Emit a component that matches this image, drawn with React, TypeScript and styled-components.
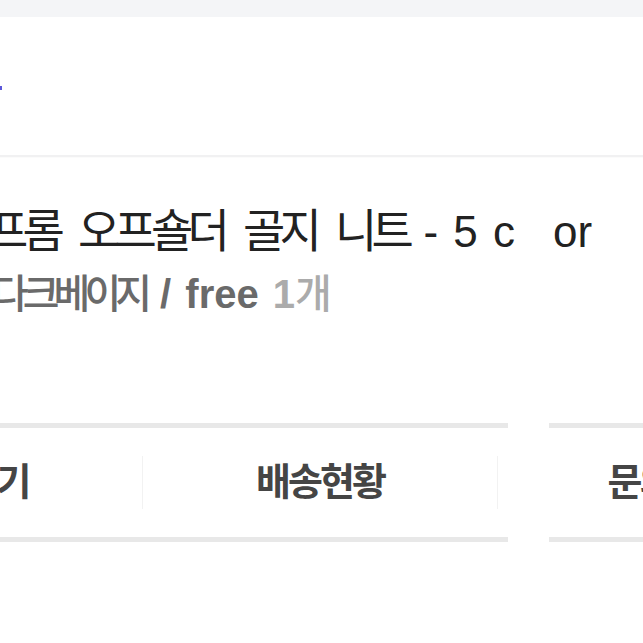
import React from "react";
import styled, { createGlobalStyle } from "styled-components";

const GlobalStyle = createGlobalStyle`
  html, body {
    margin: 0;
    padding: 0;
    background: #ffffff;
    overflow: hidden;
  }
  body {
    font-family: "Liberation Sans", "Noto Sans CJK KR", sans-serif;
    -webkit-font-smoothing: antialiased;
  }
`;

const Page = styled.div`
  width: 643px;
  height: 643px;
  overflow: hidden;
  display: flex;
  flex-direction: column;
`;

const TopBand = styled.div`
  height: 17px;
  background: #f4f5f7;
  flex-shrink: 0;
`;

const Header = styled.div`
  height: 138px;
  display: flex;
  flex-direction: column;
  flex-shrink: 0;
`;

const TabMark = styled.span`
  display: block;
  width: 2px;
  height: 4px;
  margin-top: 69px;
  background: #5b57d9;
`;

const Divider = styled.div`
  height: 2px;
  background: #f1f1f2;
  box-shadow: 0 1px 1px rgba(0, 0, 0, 0.02);
  flex-shrink: 0;
`;

const Product = styled.section`
  padding-top: 49px;
  display: flex;
  flex-direction: column;
`;

const Title = styled.div`
  margin-left: -14px;
  font-size: 44px;
  line-height: 50px;
  font-weight: 400;
  color: #222222;
  white-space: pre;
`;

const Option = styled.div`
  margin-top: 15px;
  margin-left: -8px;
  font-size: 40px;
  line-height: 44px;
  font-weight: 600;
  color: #6a6a6a;
  white-space: pre;
`;

const Ko = styled.span<{ $size: number; $tight: number; $word?: number; $weight?: number }>`
  font-size: ${(p) => p.$size}px;
  letter-spacing: ${(p) => p.$tight}px;
  word-spacing: ${(p) => p.$word ?? 0}px;
  ${(p) => (p.$weight ? `font-weight: ${p.$weight};` : "")}
`;

const Latin = styled.span<{ $gap?: number }>`
  letter-spacing: 0;
  word-spacing: ${(p) => p.$gap ?? 0}px;
`;

const Tail = styled.span<{ $left: number }>`
  margin-left: ${(p) => p.$left}px;
`;

const Qty = styled.span`
  color: #ababab;
`;

const ButtonRow = styled.div`
  margin-top: 107px;
  display: flex;
  gap: 41px;
`;

const ButtonGroup = styled.div<{ $offset?: number }>`
  display: flex;
  align-items: center;
  flex-shrink: 0;
  margin-left: ${(p) => p.$offset ?? 0}px;
  padding-right: 10px;
  height: 109px;
  border-top: 5px solid #e8e8e8;
  border-bottom: 5px solid #e8e8e8;
`;

const ActionButton = styled.button<{ $width: number }>`
  box-sizing: border-box;
  width: ${(p) => p.$width}px;
  height: 100%;
  border: 0;
  background: transparent;
  padding: 0 0 8px 0;
  display: flex;
  align-items: center;
  justify-content: center;
  font-family: "Liberation Sans", "Noto Sans CJK KR", sans-serif;
  font-size: 38px;
  font-weight: 700;
  letter-spacing: -3px;
  color: #454545;
  white-space: nowrap;
`;

const Sep = styled.span`
  width: 1px;
  height: 53px;
  background: #f2f2f2;
  flex-shrink: 0;
`;

export default function App() {
  return (
    <>
      <GlobalStyle />
      <Page>
        <TopBand />
        <Header>
          <TabMark />
        </Header>
        <Divider />
        <Product>
          <Title>
            <Ko $size={46} $tight={-5.8} $word={12}>
              프롬 오프숄더 골지 니트
            </Ko>
            <Latin $gap={3}>{" - 5 c"}</Latin>
            <Tail $left={38}>or</Tail>
          </Title>
          <Option>
            <Ko $size={40} $tight={-6} $weight={500}>
              다크베이지
            </Ko>
            <Latin $gap={3}>{" / free "}</Latin>
            <Qty>
              1
              <Ko $size={40} $tight={-6} $weight={500}>
                개
              </Ko>
            </Qty>
          </Option>
        </Product>
        <ButtonRow>
          <ButtonGroup $offset={-213}>
            <ActionButton $width={355}>리뷰쓰기</ActionButton>
            <Sep />
            <ActionButton $width={354}>배송현황</ActionButton>
            <Sep />
          </ButtonGroup>
          <ButtonGroup>
            <ActionButton $width={245}>문의하기</ActionButton>
          </ButtonGroup>
        </ButtonRow>
      </Page>
    </>
  );
}
